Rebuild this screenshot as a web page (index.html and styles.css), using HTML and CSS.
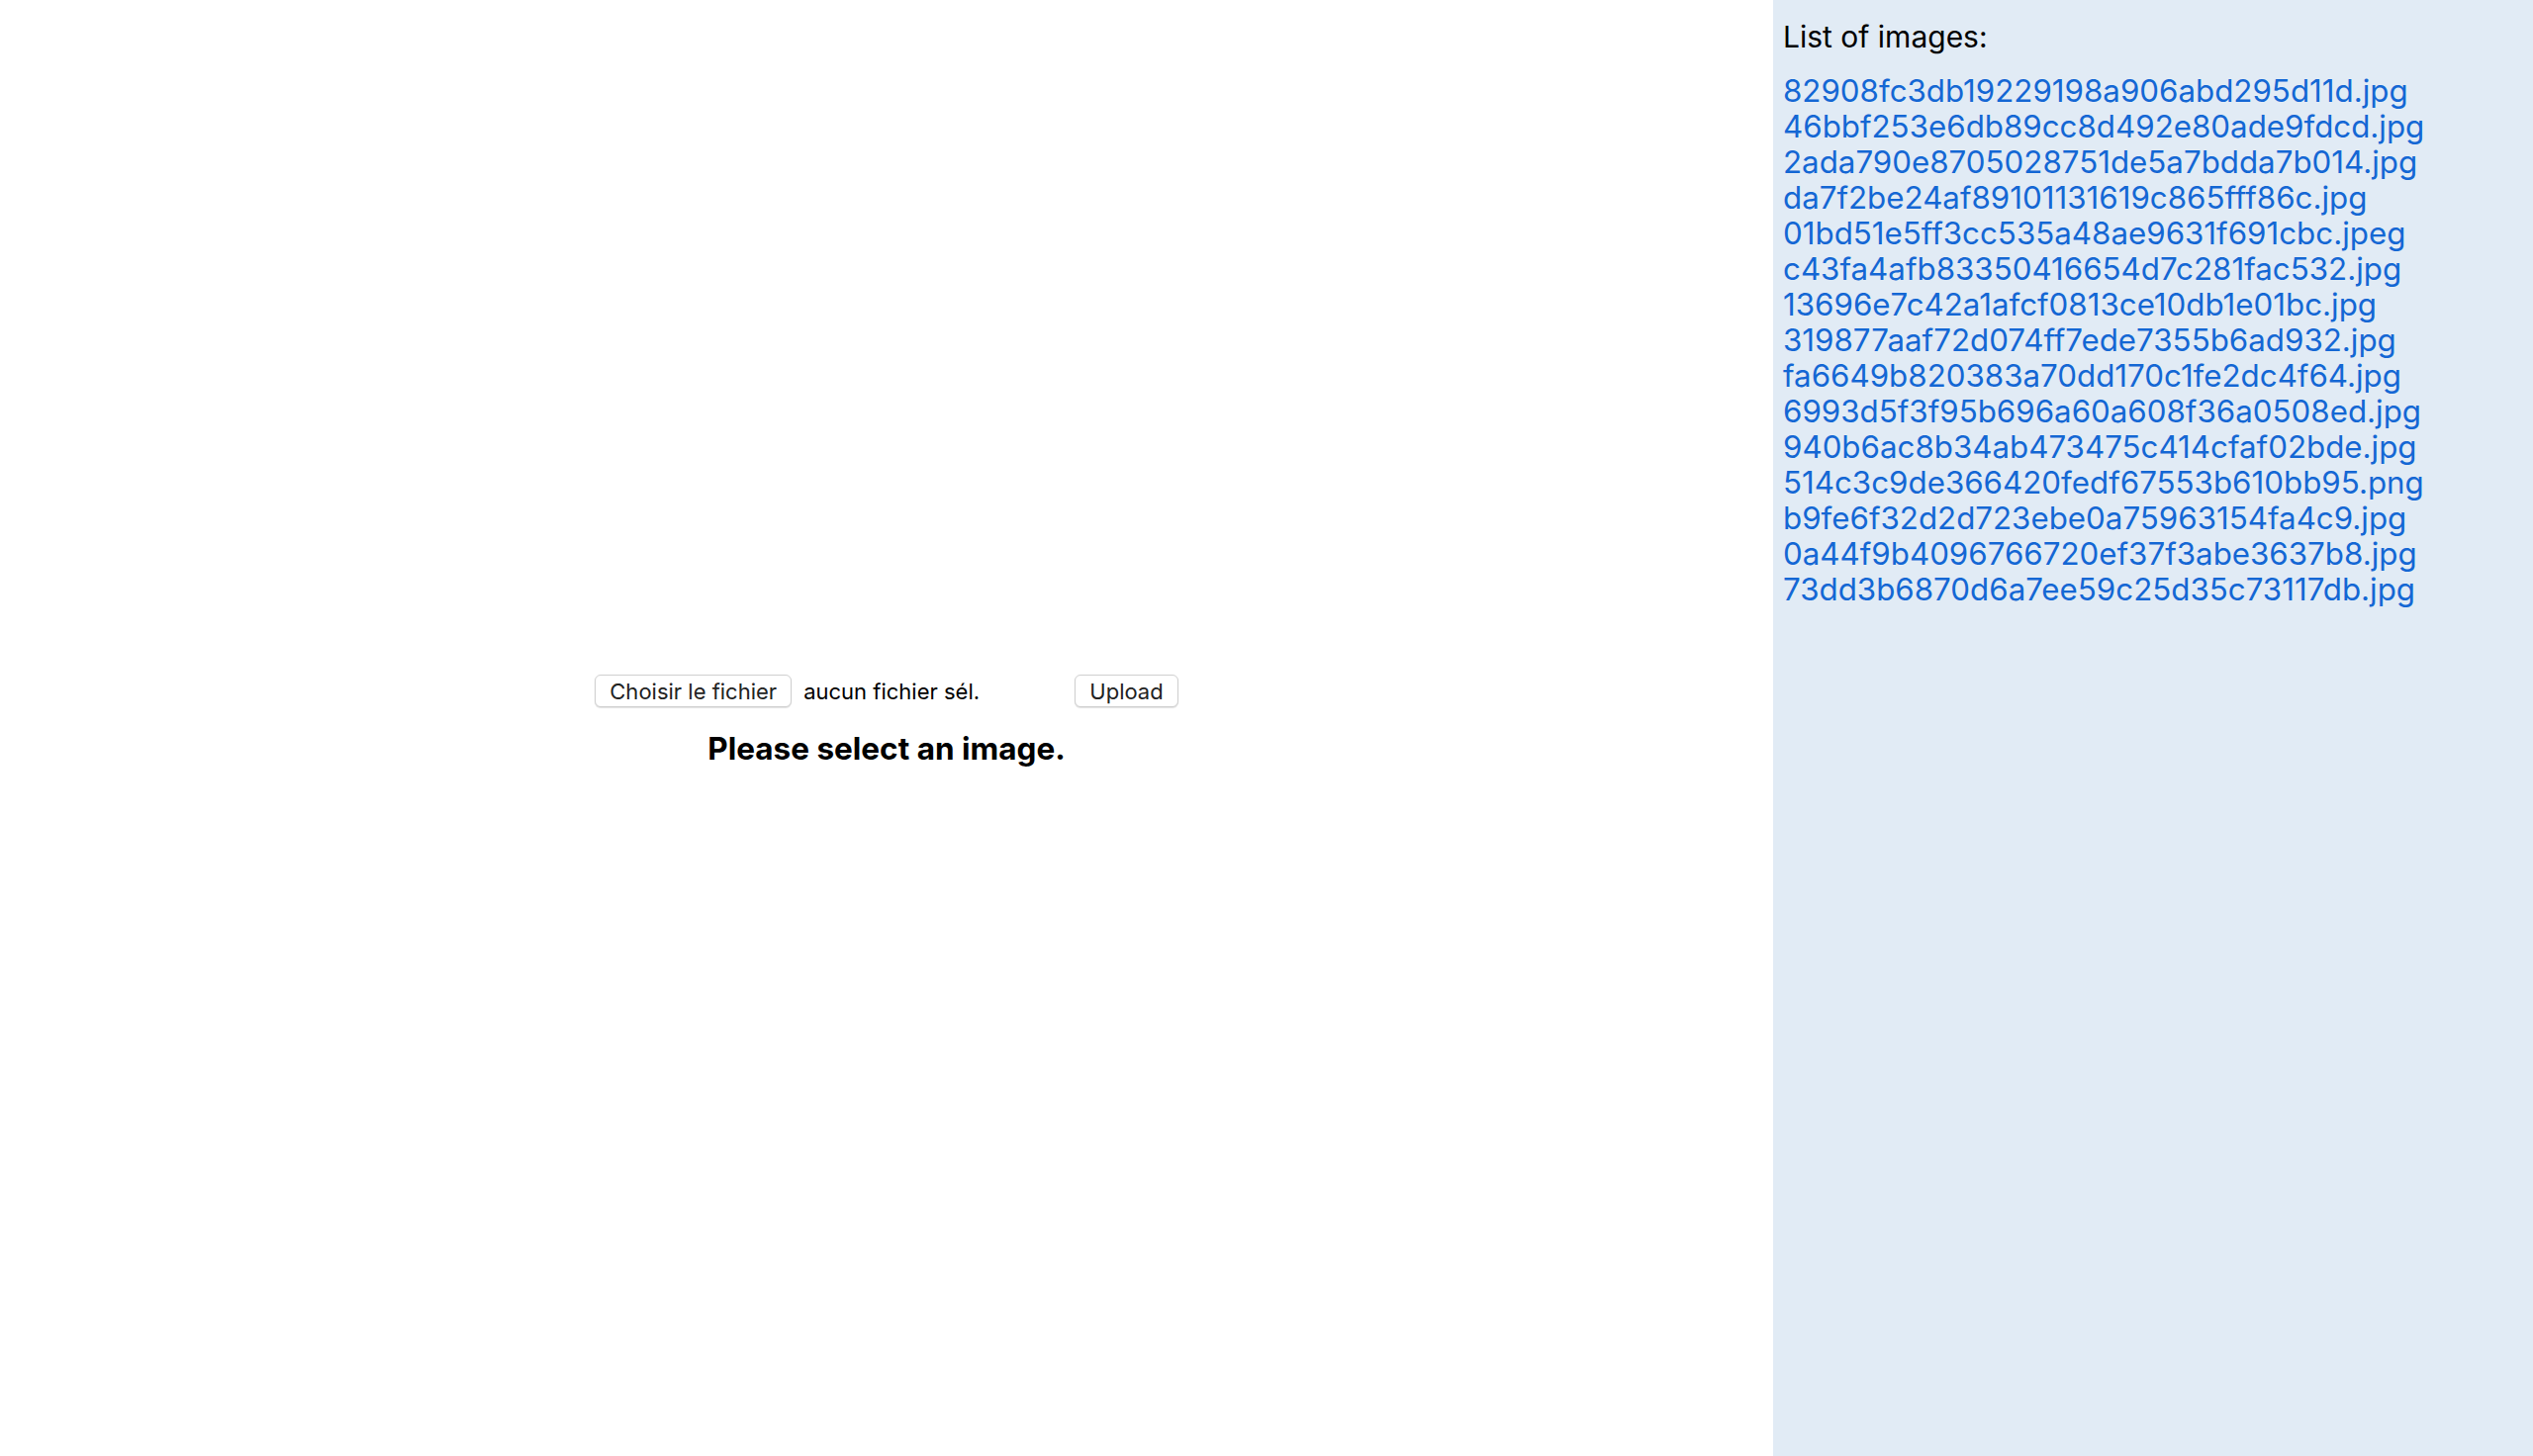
FILE: index.html
```html
<!DOCTYPE html>
<html lang="fr">
<head>
<meta charset="utf-8">
<title>Images</title>
<link rel="stylesheet" href="styles.css">
</head>
<body>
<div class="layout">
  <main class="main">
    <form class="upload-form">
      <div class="file-input">
        <button type="button" class="btn">Choisir le fichier</button>
        <span class="file-name">aucun fichier sél.</span>
      </div>
      <button type="button" class="btn">Upload</button>
    </form>
    <p class="message">Please select an image.</p>
  </main>
  <aside class="sidebar">
    <h2 class="sidebar-title">List of images:</h2>
    <ul class="image-list">
      <li><a href="#">82908fc3db19229198a906abd295d11d.jpg</a></li>
      <li><a href="#">46bbf253e6db89cc8d492e80ade9fdcd.jpg</a></li>
      <li><a href="#">2ada790e8705028751de5a7bdda7b014.jpg</a></li>
      <li><a href="#">da7f2be24af89101131619c865fff86c.jpg</a></li>
      <li><a href="#">01bd51e5ff3cc535a48ae9631f691cbc.jpeg</a></li>
      <li><a href="#">c43fa4afb83350416654d7c281fac532.jpg</a></li>
      <li><a href="#">13696e7c42a1afcf0813ce10db1e01bc.jpg</a></li>
      <li><a href="#">319877aaf72d074ff7ede7355b6ad932.jpg</a></li>
      <li><a href="#">fa6649b820383a70dd170c1fe2dc4f64.jpg</a></li>
      <li><a href="#">6993d5f3f95b696a60a608f36a0508ed.jpg</a></li>
      <li><a href="#">940b6ac8b34ab473475c414cfaf02bde.jpg</a></li>
      <li><a href="#">514c3c9de366420fedf67553b610bb95.png</a></li>
      <li><a href="#">b9fe6f32d2d723ebe0a75963154fa4c9.jpg</a></li>
      <li><a href="#">0a44f9b4096766720ef37f3abe3637b8.jpg</a></li>
      <li><a href="#">73dd3b6870d6a7ee59c25d35c73117db.jpg</a></li>
    </ul>
  </aside>
</div>
</body>
</html>
```
FILE: styles.css
```css
html, body {
  margin: 0;
  padding: 0;
  height: 100%;
}
body {
  font-family: Inter, "Liberation Sans", sans-serif;
  color: #000;
  background: #fff;
}
.layout {
  display: flex;
  height: 100vh;
}
.main {
  flex: 0 0 70%;
  display: flex;
  flex-direction: column;
  align-items: center;
  justify-content: center;
}
.upload-form {
  display: flex;
  align-items: center;
  gap: 4px;
  margin-top: -14px;
}
.file-input {
  display: flex;
  align-items: center;
  gap: 12px;
  width: 481px;
}
.btn {
  font-family: Inter, "Liberation Sans", sans-serif;
  font-size: 22px;
  color: #222;
  background: #fff;
  border: 1px solid #cfcfcf;
  border-radius: 6px;
  box-shadow: 0 1px 1px rgba(0,0,0,0.12);
  height: 33px;
  padding: 0 14px;
  line-height: 1;
}
.file-name {
  font-size: 22px;
}
.message {
  font-size: 31.5px;
  font-weight: 700;
  margin: 22px 0 0;
}
.sidebar {
  flex: 1 1 auto;
  background: #e1ebf5;
  padding: 10px 10px;
}
.sidebar-title {
  font-size: 30px;
  font-weight: 400;
  margin: 9px 0 19px;
}
.image-list {
  list-style: none;
  margin: 0;
  padding: 0;
}
.image-list li {
  font-size: 31.3px;
  line-height: 36px;
}
.image-list a {
  color: #1467d4;
  text-decoration: none;
}
```
